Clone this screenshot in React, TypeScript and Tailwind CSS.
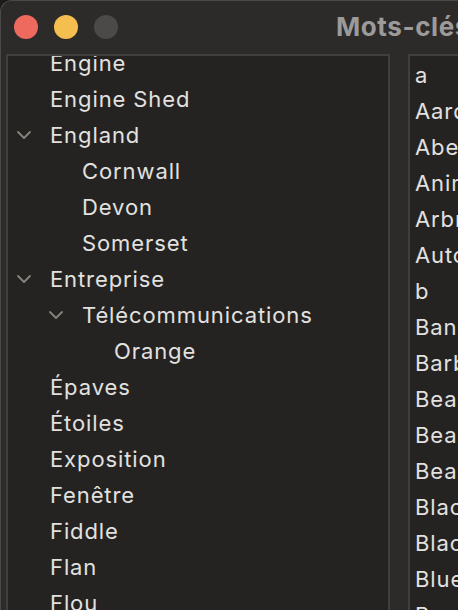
import React from "react";

type Row = { label: string; level: number; open?: boolean };

const leftRows: Row[] = [
  { label: "Engine", level: 0 },
  { label: "Engine Shed", level: 0 },
  { label: "England", level: 0, open: true },
  { label: "Cornwall", level: 1 },
  { label: "Devon", level: 1 },
  { label: "Somerset", level: 1 },
  { label: "Entreprise", level: 0, open: true },
  { label: "Télécommunications", level: 1, open: true },
  { label: "Orange", level: 2 },
  { label: "Épaves", level: 0 },
  { label: "Étoiles", level: 0 },
  { label: "Exposition", level: 0 },
  { label: "Fenêtre", level: 0 },
  { label: "Fiddle", level: 0 },
  { label: "Flan", level: 0 },
  { label: "Flou", level: 0 },
];

const rightRows = [
  "a",
  "Aardvark",
  "Abeilles",
  "Animaux",
  "Arbres",
  "Automne",
  "b",
  "Bangor",
  "Barbecue",
  "Beach",
  "Beacon",
  "Beauté",
  "Black",
  "Blackpool",
  "Blue",
  "Brume",
];

const indent = ["pl-[42px]", "pl-[74px]", "pl-[106px]"];
const chevronPos = ["left-[8px]", "left-[40px]", "left-[72px]"];

function Chevron({ level }: { level: number }) {
  return (
    <svg
      className={`absolute top-1/2 -translate-y-1/2 ${chevronPos[level]}`}
      width="16"
      height="10"
      viewBox="0 0 16 10"
      fill="none"
    >
      <path
        d="M2 2 L8 8 L14 2"
        stroke="#85847f"
        strokeWidth="1.8"
        strokeLinecap="round"
        strokeLinejoin="round"
      />
    </svg>
  );
}

export default function App() {
  return (
    <div
      className="w-[458px] h-[610px] overflow-hidden bg-[#1c1b1a]"
      style={{ fontFamily: "Inter, 'Noto Sans', sans-serif" }}
    >
      <div className="w-[470px] h-[620px] bg-[#2c2b2a] rounded-tl-[12px] border-t border-l border-[#4a4948] flex flex-col">
        <div className="h-[53px] flex items-center shrink-0 relative">
          <div className="flex items-center gap-[16px] pl-[13px] -mt-[1px]">
            <span className="w-[24px] h-[24px] rounded-full bg-[#ee6a5f]" />
            <span className="w-[24px] h-[24px] rounded-full bg-[#f5bf4f]" />
            <span className="w-[24px] h-[24px] rounded-full bg-[#4b4a49]" />
          </div>
          <div className="absolute left-[335px] top-[10px] text-[26px] font-bold tracking-[0.6px] text-[#9c9b9a] whitespace-nowrap leading-[32px]">
            Mots-clés
          </div>
        </div>
        <div className="flex flex-1 min-h-0 pl-[5px] gap-[18px]">
          <div className="w-[384px] border-2 border-[#403f3e] bg-[#242321] overflow-hidden">
            <div className="-mt-[11px]">
              {leftRows.map((r, i) => (
                <div
                  key={i}
                  className={`relative h-[36px] flex items-center text-[22px] tracking-[0.9px] text-[#e2e1e0] whitespace-nowrap ${indent[r.level]}`}
                >
                  {r.open && <Chevron level={r.level} />}
                  {r.label}
                </div>
              ))}
            </div>
          </div>
          <div className="flex-1 border-2 border-r-0 border-[#403f3e] bg-[#242321] overflow-hidden">
            <div className="pt-px">
              {rightRows.map((r, i) => (
                <div
                  key={i}
                  className="h-[36px] flex items-center pl-[5px] text-[22px] tracking-[0.9px] text-[#e2e1e0] whitespace-nowrap"
                >
                  {r}
                </div>
              ))}
            </div>
          </div>
        </div>
      </div>
    </div>
  );
}
